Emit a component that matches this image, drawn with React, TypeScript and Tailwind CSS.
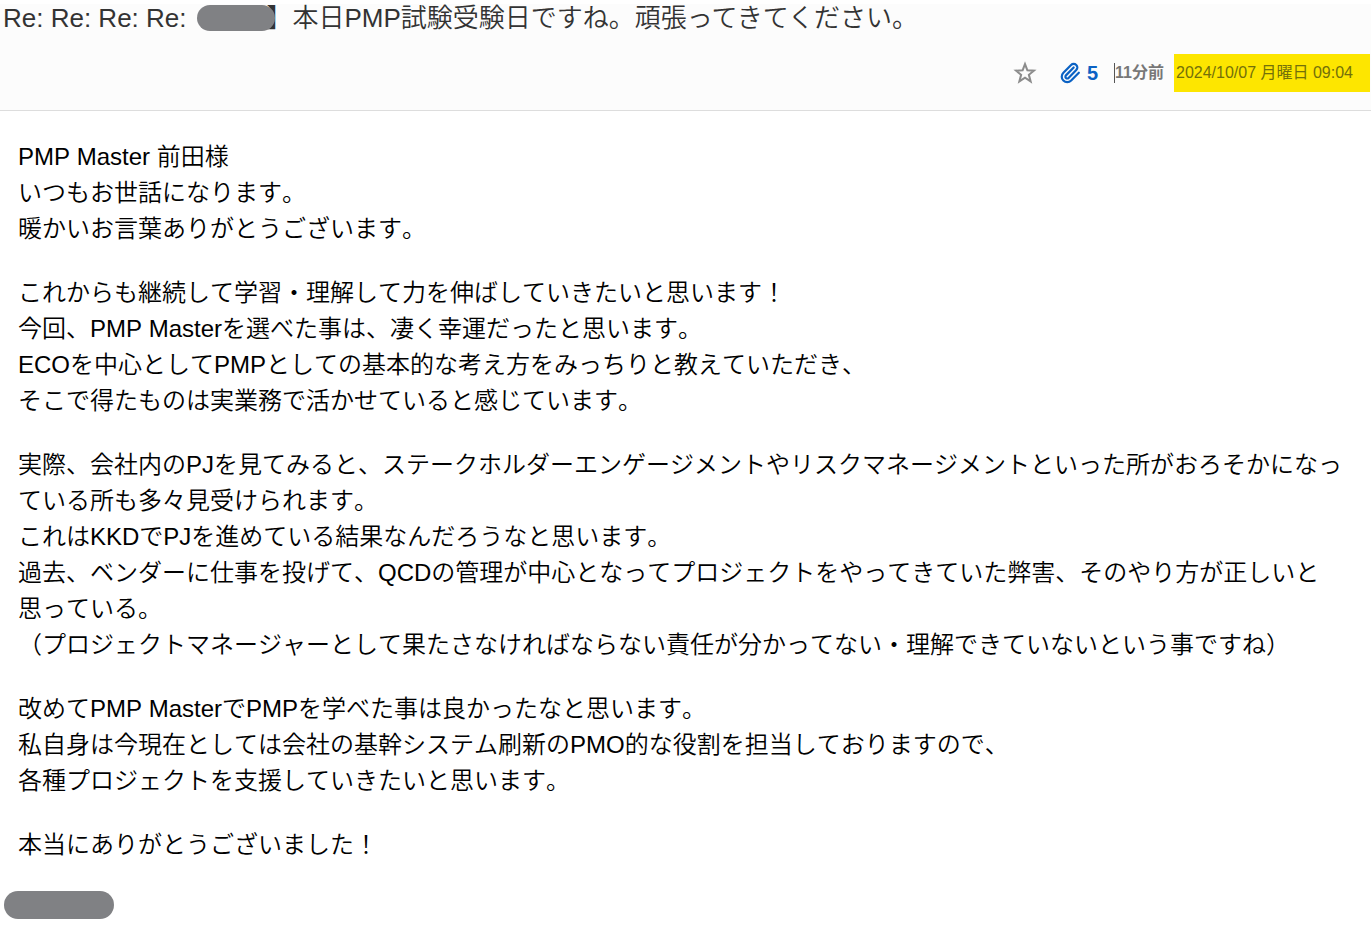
import { Paperclip } from 'lucide-react'

const PARAGRAPHS = [
  ['PMP Master 前田様', 'いつもお世話になります。', '暖かいお言葉ありがとうございます。'],
  [
    'これからも継続して学習・理解して力を伸ばしていきたいと思います！',
    '今回、PMP Masterを選べた事は、凄く幸運だったと思います。',
    'ECOを中心としてPMPとしての基本的な考え方をみっちりと教えていただき、',
    'そこで得たものは実業務で活かせていると感じています。',
  ],
  [
    '実際、会社内のPJを見てみると、ステークホルダーエンゲージメントやリスクマネージメントといった所がおろそかになっ',
    'ている所も多々見受けられます。',
    'これはKKDでPJを進めている結果なんだろうなと思います。',
    '過去、ベンダーに仕事を投げて、QCDの管理が中心となってプロジェクトをやってきていた弊害、そのやり方が正しいと',
    '思っている。',
    '（プロジェクトマネージャーとして果たさなければならない責任が分かってない・理解できていないという事ですね）',
  ],
  [
    '改めてPMP MasterでPMPを学べた事は良かったなと思います。',
    '私自身は今現在としては会社の基幹システム刷新のPMO的な役割を担当しておりますので、',
    '各種プロジェクトを支援していきたいと思います。',
  ],
  ['本当にありがとうございました！'],
]

function StarIcon() {
  return (
    <svg viewBox="1.5 1.5 21 21" className="h-6 w-6" fill="none" stroke="currentColor" strokeWidth="1.8" aria-hidden="true">
      <path d="M12 4.2L14.1 9.6L19.8 10L15.4 13.6L16.9 19.3L12 16.1L7.1 19.3L8.6 13.6L4.2 10L9.9 9.6Z" />
    </svg>
  )
}

export default function App() {
  return (
    <div className="min-h-screen bg-white font-['Liberation_Sans','Noto_Sans_CJK_JP',sans-serif] text-black" lang="ja">
      <header className="border-t-4 border-b border-t-white border-b-[#dddddd] bg-[#fcfcfc] pb-[18px]">
        <h1 className="flex items-center pl-[3px] text-[26px] leading-7 font-[350] text-[#333333]">
          <span>Re: Re: Re: Re:</span>
          <span className="relative -mr-2 ml-2.5 h-[26px] w-[78px] rounded-full bg-[#808184]" />
          <span>】本日PMP試験受験日ですね。頑張ってきてください。</span>
        </h1>
        <div className="mt-[22px] mr-px flex items-center justify-end text-base">
          <button type="button" aria-label="スター" className="mr-[22px] text-[#8c8c8c]"><StarIcon /></button>
          <button type="button" className="mr-4 flex items-center gap-1.5 text-xl font-bold text-[#0b62c4]">
            <Paperclip className="h-[22px] w-[22px]" strokeWidth={2.4} aria-hidden="true" />5
          </button>
          <span className="mr-2.5 border-l border-[#555555] leading-5 font-bold text-[#777777]">11分前</span>
          <time dateTime="2024-10-07T09:04" className="bg-[#fde600] py-[7px] pr-[17px] pl-0.5 text-[#73700a]">2024/10/07 月曜日 09:04</time>
        </div>
      </header>
      <main className="px-4.5 pt-7 text-2xl leading-9 font-[350] [font-kerning:none]">
        {PARAGRAPHS.map((lines, i) => (
          <div key={i} className="mb-7">
            {lines.map((line) => <p key={line}>{line}</p>)}
          </div>
        ))}
      </main>
      <footer className="px-1">
        <div className="h-7 w-[110px] rounded-full bg-[#808184]" />
      </footer>
    </div>
  )
}
